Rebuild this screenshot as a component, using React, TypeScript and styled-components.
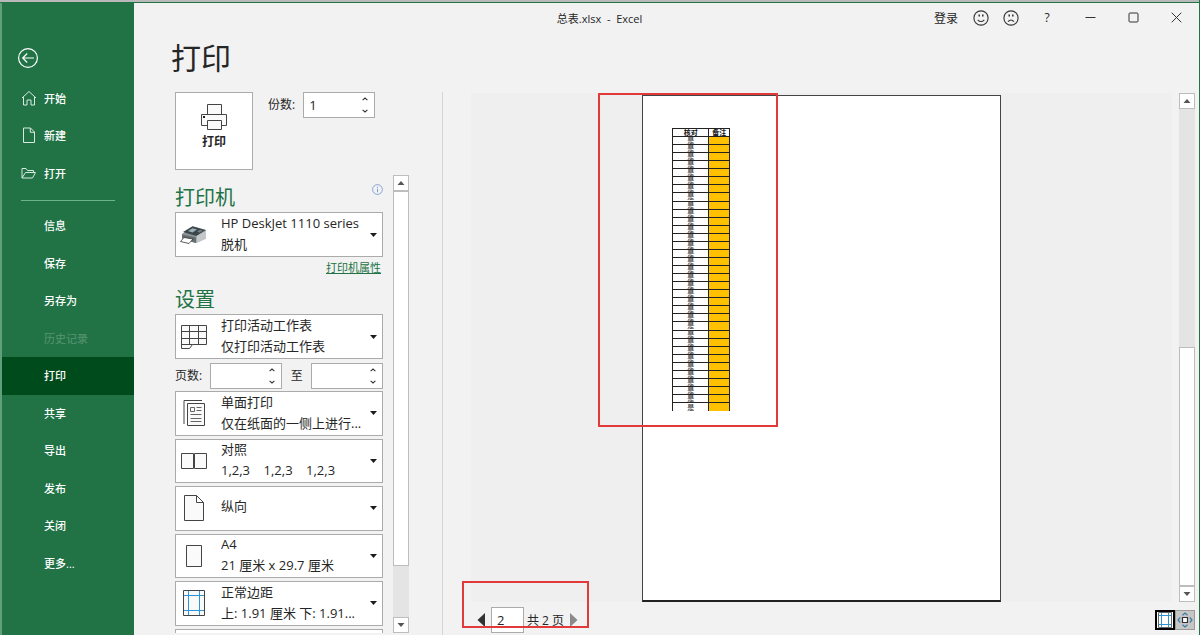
import React from "react";
import styled, { createGlobalStyle } from "styled-components";

const green = "#217346";
const edge = "#ababab";

const GlobalStyle = createGlobalStyle`
  *, *::before, *::after { box-sizing: border-box; }
  body { margin: 0; }
  body, button, input, select {
    font-family: "Open Sans", "Noto Sans CJK SC", sans-serif;
    font-size: 12px;
    color: #262626;
  }
  button, input, select { margin: 0; padding: 0; border: 0; background: none; border-radius: 0; }
  svg { display: block; flex: none; }
`;

const Window = styled.div`
  display: grid;
  grid-template: 29px minmax(0, 1fr) / 134px minmax(0, 1fr);
  height: 100vh;
  overflow: hidden;
  background: #f2f2f2;
  border-right: 1px solid ${green};
  box-shadow: inset 0 2px #b9b9b9, inset 0 3px ${green};
  padding-top: 3px;
`;

/* Title bar */
const TitleBar = styled.header`
  grid-area: 1 / 1 / 2 / 3;
  display: grid;
  grid-template-columns: 1fr auto 1fr;
  align-items: center;
`;
const DocTitle = styled.div`
  grid-column: 2;
  font-size: 11px;
  white-space: pre;
`;
const WindowTools = styled.div`
  display: flex;
  align-items: center;
  justify-content: flex-end;
  padding-right: 1px;
`;
const ToolButton = styled.button<{ $wide?: boolean }>`
  display: flex;
  align-items: center;
  justify-content: center;
  width: ${(p) => (p.$wide ? 43 : 30)}px;
  height: 28px;
`;
const SignIn = styled.button`
  font-size: 12px;
  margin-right: 8px;
`;
const HelpGap = styled.div`
  margin: 0 7px 0 6px;
`;

/* Navigation */
const Sidebar = styled.nav`
  grid-area: 1 / 1 / 3 / 2;
  background: ${green};
  border-left: 2px solid #5f9f7c;
  overflow: hidden;
`;
const BackButton = styled.button`
  display: block;
  margin: 44px 0 11px 15px;
`;
const NavList = styled.ul<{ $size: number }>`
  display: flex;
  flex-direction: column;
  height: ${(p) => p.$size}px;
  margin: 0;
  padding: 0;
  list-style: none;
`;
const NavItem = styled.li`
  display: flex;
  flex: 1;
`;
const NavButton = styled.button<{ $active?: boolean }>`
  display: grid;
  grid-template-columns: 16px 1fr;
  column-gap: 7px;
  align-items: center;
  width: 100%;
  padding: 0 0 1px 19px;
  font-size: 11px;
  font-weight: 500;
  text-align: left;
  color: #fff;
  background: ${(p) => (p.$active ? "#004b1c" : "transparent")};
  &:disabled { color: #4f9069; }
  span { grid-column: 2; }
`;
const NavRule = styled.hr`
  margin: 8px 19px 6px;
  border: 0;
  border-top: 1px solid #6fb58c;
`;

/* Page body */
const Main = styled.main`
  grid-area: 2 / 2 / 3 / 3;
  display: flex;
  flex-direction: column;
  min-height: 0;
`;
const PageTitle = styled.h1`
  margin: 0 0 9px;
  padding: 1px 0 0 37px;
  font-size: 30px;
  line-height: 50px;
  font-weight: 400;
`;
const Columns = styled.div`
  display: flex;
  flex: 1;
  min-height: 0;
`;
const SettingsPane = styled.section`
  display: flex;
  flex-direction: column;
  gap: 5px;
  width: 309px;
  padding: 0 33px 2px 41px;
  border-right: 1px solid #d6d6d6;
`;
const PrintRow = styled.div`
  display: flex;
`;
const PrintButton = styled.button`
  display: flex;
  flex-direction: column;
  align-items: center;
  gap: 1px;
  width: 78px;
  height: 78px;
  padding-top: 10px;
  background: #fff;
  border: 1px solid ${edge};
  font-size: 12px;
  font-weight: 700;
`;
const FieldLabel = styled.label`
  font-size: 12px;
  line-height: 25px;
  white-space: nowrap;
`;
const Copies = styled.div`
  display: flex;
  gap: 8px;
  padding-left: 15px;
`;
const SpinBox = styled.div`
  display: grid;
  grid-template: 1fr 1fr / minmax(0, 1fr) 18px;
  width: 72px;
  height: 26px;
  background: #fff;
  border: 1px solid ${edge};
`;
const SpinInput = styled.input`
  grid-row: 1 / 3;
  width: 100%;
  padding-left: 5px;
  font-size: 13px;
`;
const SpinButton = styled.button`
  display: flex;
  align-items: center;
  justify-content: center;
`;
const ScrollRegion = styled.div`
  display: flex;
  justify-content: space-between;
  flex: 1;
  min-height: 0;
`;
const Options = styled.div`
  width: 208px;
  overflow: hidden;
`;
const HeadingRow = styled.div`
  display: flex;
  justify-content: space-between;
  align-items: flex-start;
  padding-top: 9px;
  height: 37px;
`;
const Heading = styled.h2`
  margin: 0;
  font-size: 20px;
  line-height: 28px;
  font-weight: 400;
  color: ${green};
`;
const LinkRow = styled.div`
  display: flex;
  justify-content: flex-end;
  padding: 2px 2px 0 0;
`;
const PropertiesLink = styled.a`
  font-size: 11px;
  line-height: 18px;
  color: ${green};
`;
const PickerBox = styled.div`
  display: grid;
  grid-template: minmax(0, 1fr) / 36px minmax(0, 1fr) 18px;
  align-items: center;
  justify-items: center;
  height: 45px;
  background: #fff;
  border: 1px solid ${edge};
`;
const PickerIcon = styled.span`
  grid-area: 1 / 1 / 2 / 2;
  pointer-events: none;
`;
const PickerCaretCell = styled.span`
  grid-area: 1 / 3 / 2 / 4;
  pointer-events: none;
`;
const PickerSelect = styled.select<{ $lines: number }>`
  grid-area: 1 / 1 / 2 / 4;
  appearance: none;
  width: 100%;
  height: 100%;
  padding: 0 18px ${(p) => (p.$lines === 2 ? 23 : 5)}px 45px;
  font-size: 13px;
`;
const PickerNote = styled.span`
  grid-area: 1 / 2 / 2 / 3;
  align-self: end;
  justify-self: stretch;
  margin-left: 9px;
  font-size: 13px;
  line-height: 23px;
  white-space: pre;
  pointer-events: none;
`;
const PageRange = styled.div`
  display: flex;
  justify-content: space-between;
  padding: 4px 0 2px;
`;
const PickerStack = styled.div`
  display: flex;
  flex-direction: column;
  gap: 3px;
  height: 282px;
  > div { flex: 1; }
`;

/* Scroll bars */
const ScrollTrack = styled.div`
  display: flex;
  flex-direction: column;
  width: 16px;
  background: #e4e4e4;
`;
const ScrollButton = styled.button`
  display: flex;
  align-items: center;
  justify-content: center;
  height: 16px;
  background: #fff;
  border: 1px solid #bdbdbd;
`;
const ScrollThumb = styled.div<{ $from: number; $to: number }>`
  flex: ${(p) => p.$to - p.$from};
  background: #fff;
  border: 1px solid #bdbdbd;
`;
const ScrollSpace = styled.div<{ $share: number }>`
  flex: ${(p) => p.$share};
`;

/* Preview */
const PreviewPane = styled.section`
  display: flex;
  flex-direction: column;
  flex: 1;
  min-width: 0;
`;
const PreviewArea = styled.div`
  display: flex;
  flex: 1;
  gap: 7px;
  min-height: 0;
  padding: 1px 4px 0 28px;
`;
const Canvas = styled.div`
  display: flex;
  justify-content: center;
  flex: 1;
  padding-top: 2px;
  background: #efefef;
`;
const Paper = styled.div`
  position: relative;
  height: 100%;
  aspect-ratio: 210 / 297;
  padding: 32px 29px;
  background: #fff;
  border: 1px solid #444;
  border-bottom: 2px solid #222;
`;
const Sheet = styled.table`
  width: 58px;
  height: 283px;
  table-layout: fixed;
  border-collapse: collapse;
  font-size: 7px;
  line-height: 7px;
  font-weight: 700;
  text-align: center;
  color: #111;
  th, td {
    height: 8px;
    padding: 0;
    border: 1px solid #222;
    white-space: nowrap;
  }
  th:first-child { width: 36px; }
  td { font-weight: 400; }
  td:last-child { background: #ffc000; }
  tr:last-child td { border-bottom: 0; }
`;
const Mark = styled.div<{ $x: number; $y: number; $w: number; $h: number }>`
  position: absolute;
  left: ${(p) => p.$x}px;
  top: ${(p) => p.$y}px;
  width: ${(p) => p.$w}px;
  height: ${(p) => p.$h}px;
  border: 2px solid #e23a3a;
  pointer-events: none;
`;
const StatusRow = styled.div`
  display: flex;
  justify-content: space-between;
  align-items: center;
  height: 33px;
  padding: 3px 4px 0 33px;
`;
const Pager = styled.div`
  position: relative;
  display: flex;
  align-items: center;
  gap: 3px;
`;
const PagerButton = styled.button`
  padding: 0 3px 0 1px;
  &:disabled { padding: 0 0 0 3px; }
`;
const PageInput = styled.input`
  width: 33px;
  height: 26px;
  padding-left: 5px;
  background: #fff;
  border: 1px solid ${edge};
  font-size: 13px;
`;
const ViewButtons = styled.div`
  display: flex;
`;
const ViewButton = styled.button<{ $on?: boolean }>`
  display: flex;
  align-items: center;
  justify-content: center;
  width: 20px;
  height: 20px;
  background: ${(p) => (p.$on ? "#fff" : "#c6c6c6")};
  border: ${(p) => (p.$on ? "2px solid #000" : "1px solid #9a9a9a")};
`;

type Dir = "up" | "down";

const Caret = ({ dir = "down" }: { dir?: Dir }) => (
  <svg width="8" height="4" viewBox="0 0 8 4">
    <path d={dir === "down" ? "M0.5 0h7L4 4z" : "M0.5 4h7L4 0z"} fill="#555" />
  </svg>
);
const PickerCaret = () => (
  <svg width="7" height="4" viewBox="0 0 7 4">
    <path d="M0 0h7L3.500 4z" fill="#1c1c1c" />
  </svg>
);
const Chevron = ({ dir }: { dir: Dir }) => (
  <svg width="6" height="4" viewBox="0 0 6 4" fill="none" stroke="#333" strokeWidth="1.1">
    <path d={dir === "up" ? "M0.600 3.200 3 1 5.400 3.200" : "M0.600 0.800 3 3 5.400 0.800"} />
  </svg>
);

const Face = ({ sad }: { sad?: boolean }) => (
  <svg width="16" height="16" viewBox="0 0 16 16" fill="none" stroke="#333" strokeWidth="1.1">
    <circle cx="8" cy="8" r="7.100" />
    <path d={sad ? "M5 11.700Q8 8.300 11 11.700" : "M4.700 9.800Q8 13.200 11.300 9.800"} />
    <path d="M6.200 4.600v2M9.800 4.600v2" strokeWidth="1.500" />
  </svg>
);

const navIcon = { width: 16, height: 16, viewBox: "0 0 16 16", fill: "none", stroke: "#d7eadf" };
const HomeIcon = () => (
  <svg {...navIcon}>
    <path d="M1 8 8 1.500 15 8M2.500 7v8H6V10h4v5h3.500V7" />
  </svg>
);
const NewIcon = () => (
  <svg {...navIcon}>
    <path d="M2.500 1h7l4 4v10.500h-11zM9.300 1v4.300h4.200" />
  </svg>
);
const OpenIcon = () => (
  <svg {...navIcon}>
    <path d="M1 13V3.500h4l1.500 2h6V7.500M1 13h10.500l3-5.500H4.500L1 13" />
  </svg>
);

const line = { fill: "#fafafa", stroke: "#444" };
const PrinterGlyph = () => (
  <svg width="28" height="28" viewBox="0 0 28 28" {...line}>
    <path d="M7.500 11V1.500h14V11" />
    <path d="M1.500 11.500h25v11h-25z" />
    <path d="M7.500 17.500h14v9h-14z" />
    <path d="M3 13h2v2H3z" fill="#222" stroke="none" />
  </svg>
);
const DeviceGlyph = () => (
  <svg width="28" height="20" viewBox="0 0 28 20">
    <path d="M2 9 13 1.500 26 5v8.500L16 18 2 13.500z" fill="#8c9295" />
    <path d="M3 7 12.500 1.200 25.500 5 16.500 11z" fill="#3c464a" />
    <path d="M8 6 12.500 3.200 17 4.500 12.500 7.600z" fill="#9db1b8" />
    <path d="M17 6.500 20 4.800 23 5.600 19.500 7.800z" fill="#6c7d83" />
    <path d="M16.500 11 26 5.500v8L16.500 18z" fill="#c3c7c9" />
    <path d="M2 9.500 16 12.500V18l-3-.7L2 13z" fill="#666d70" />
    <path d="M4 12.500 13 14 9 18.500 0.500 16.500z" fill="#fff" stroke="#333" strokeWidth="0.800" />
  </svg>
);
const SheetGlyph = () => (
  <svg width="28" height="26" viewBox="0 0 28 26" {...line}>
    <path d="M1.500 1.500h25v19h-14l-3 4h-8z" />
    <path d="M1.500 7.500h25M1.500 14.500h25M9.500 1.500v19M18.500 1.500v19M1.500 20.500h11" />
  </svg>
);
const OneSidedGlyph = () => (
  <svg width="22" height="28" viewBox="0 0 22 28" {...line}>
    <path d="M1 25V1.500h18" fill="none" />
    <path d="M4.500 4.500h17v22h-17z" />
    <path d="M7.500 8.500h4v4h-4zM13.500 8.500h5M13.500 11.500h5M7.500 15.500h11M7.500 19.500h11M7.500 22.500h11" stroke="#666" />
  </svg>
);
const CollateGlyph = () => (
  <svg width="28" height="18" viewBox="0 0 28 18" {...line}>
    <path d="M1.500 1.500h12v15h-12zM14.500 1.500h12v15h-12z" />
  </svg>
);
const PortraitGlyph = () => (
  <svg width="22" height="28" viewBox="0 0 22 28" {...line}>
    <path d="M1.500 1.500h12l7 7v18h-19zM13.500 1.500v7h7" />
  </svg>
);
const PaperGlyph = () => (
  <svg width="18" height="24" viewBox="0 0 18 24" {...line}>
    <path d="M1.500 1.500h15v21h-15z" />
  </svg>
);
const MarginGlyph = () => (
  <svg width="22" height="28" viewBox="0 0 22 28" fill="none">
    <path d="M0.500 1.500h21v25h-21z" fill="#fafafa" stroke="#444" />
    <path d="M5.500 2v24M16.500 2v24M1 6.500h20M1 21.500h20" stroke="#2f94d4" />
  </svg>
);

const Picker = ({ name, icon, title, note }: { name: string; icon: React.ReactNode; title: string; note?: string }) => (
  <PickerBox>
    <PickerSelect aria-label={name} $lines={note ? 2 : 1}>
      <option>{title}</option>
    </PickerSelect>
    <PickerIcon>{icon}</PickerIcon>
    {note && <PickerNote>{note}</PickerNote>}
    <PickerCaretCell><PickerCaret /></PickerCaretCell>
  </PickerBox>
);

const Spinner = ({ id, value }: { id: string; value: string }) => (
  <SpinBox>
    <SpinInput id={id} defaultValue={value} inputMode="numeric" />
    <SpinButton aria-label="增加"><Chevron dir="up" /></SpinButton>
    <SpinButton aria-label="减少"><Chevron dir="down" /></SpinButton>
  </SpinBox>
);

const ScrollBar = ({ from, to }: { from: number; to: number }) => (
  <ScrollTrack>
    <ScrollButton aria-label="向上滚动"><Caret dir="up" /></ScrollButton>
    {from > 0 && <ScrollSpace $share={from} />}
    <ScrollThumb $from={from} $to={to} />
    {to < 100 && <ScrollSpace $share={100 - to} />}
    <ScrollButton aria-label="向下滚动"><Caret /></ScrollButton>
  </ScrollTrack>
);

const places = [
  { text: "开始", icon: <HomeIcon /> },
  { text: "新建", icon: <NewIcon /> },
  { text: "打开", icon: <OpenIcon /> },
];
const commands = ["信息", "保存", "另存为", "历史记录", "打印", "共享", "导出", "发布", "关闭", "更多..."];
const rows = Array.from({ length: 34 }, (_, i) => i);

export default function App() {
  return (
    <Window>
      <GlobalStyle />
      <Sidebar>
        <BackButton aria-label="返回">
          <svg width="22" height="22" viewBox="0 0 22 22" fill="none" stroke="#fff" strokeWidth="1.2">
            <circle cx="11" cy="11" r="9.400" />
            <path d="M17 11H6M10.200 6.500 5.700 11l4.500 4.500" />
          </svg>
        </BackButton>
        <NavList $size={112}>
          {places.map((p) => (
            <NavItem key={p.text}>
              <NavButton>{p.icon}<span>{p.text}</span></NavButton>
            </NavItem>
          ))}
        </NavList>
        <NavRule />
        <NavList $size={375}>
          {commands.map((c) => (
            <NavItem key={c}>
              <NavButton $active={c === "打印"} disabled={c === "历史记录"}><span>{c}</span></NavButton>
            </NavItem>
          ))}
        </NavList>
      </Sidebar>

      <TitleBar>
        <DocTitle>{"总表.xlsx  -  Excel"}</DocTitle>
        <WindowTools>
          <SignIn>登录</SignIn>
          <ToolButton aria-label="微笑"><Face /></ToolButton>
          <ToolButton aria-label="皱眉"><Face sad /></ToolButton>
          <HelpGap><ToolButton>?</ToolButton></HelpGap>
          <ToolButton $wide aria-label="最小化">
            <svg width="11" height="11" viewBox="0 0 11 11" stroke="#333"><path d="M0.500 5.500h10" /></svg>
          </ToolButton>
          <ToolButton $wide aria-label="最大化">
            <svg width="11" height="11" viewBox="0 0 11 11" fill="none" stroke="#333"><rect x="1" y="1" width="9" height="9" rx="1" /></svg>
          </ToolButton>
          <ToolButton $wide aria-label="关闭">
            <svg width="11" height="11" viewBox="0 0 11 11" stroke="#333"><path d="M0.700 0.700l9.600 9.600M10.300 0.700l-9.600 9.600" /></svg>
          </ToolButton>
        </WindowTools>
      </TitleBar>

      <Main>
        <PageTitle>打印</PageTitle>
        <Columns>
          <SettingsPane>
            <PrintRow>
              <PrintButton><PrinterGlyph />打印</PrintButton>
              <Copies>
                <FieldLabel htmlFor="copies">份数:</FieldLabel>
                <Spinner id="copies" value="1" />
              </Copies>
            </PrintRow>
            <ScrollRegion>
              <Options>
                <HeadingRow>
                  <Heading>打印机</Heading>
                  <svg width="11" height="11" viewBox="0 0 11 11" fill="none" stroke="#7d9cd0">
                    <circle cx="5.500" cy="5.500" r="4.900" strokeWidth="0.900" />
                    <path d="M5.500 4.800v3.400M5.500 2.700v1.200" />
                  </svg>
                </HeadingRow>
                <Picker name="打印机" icon={<DeviceGlyph />} title="HP DeskJet 1110 series" note="脱机" />
                <LinkRow><PropertiesLink href="#properties">打印机属性</PropertiesLink></LinkRow>
                <HeadingRow><Heading>设置</Heading></HeadingRow>
                <Picker name="打印范围" icon={<SheetGlyph />} title="打印活动工作表" note="仅打印活动工作表" />
                <PageRange>
                  <FieldLabel htmlFor="from">页数:</FieldLabel>
                  <Spinner id="from" value="" />
                  <FieldLabel htmlFor="to">至</FieldLabel>
                  <Spinner id="to" value="" />
                </PageRange>
                <PickerStack>
                  <Picker name="单双面" icon={<OneSidedGlyph />} title="单面打印" note="仅在纸面的一侧上进行..." />
                  <Picker name="对照" icon={<CollateGlyph />} title="对照" note={"1,2,3    1,2,3    1,2,3"} />
                  <Picker name="方向" icon={<PortraitGlyph />} title="纵向" />
                  <Picker name="纸张" icon={<PaperGlyph />} title="A4" note="21 厘米 x 29.7 厘米" />
                  <Picker name="边距" icon={<MarginGlyph />} title="正常边距" note="上: 1.91 厘米 下: 1.91..." />
                  <PickerBox />
                </PickerStack>
              </Options>
              <ScrollBar from={0} to={88} />
            </ScrollRegion>
          </SettingsPane>

          <PreviewPane>
            <PreviewArea>
              <Canvas>
                <Paper>
                  <Sheet>
                    <thead>
                      <tr><th>核对</th><th>备注</th></tr>
                    </thead>
                    <tbody>
                      {rows.map((r) => (
                        <tr key={r}><td>是</td><td /></tr>
                      ))}
                    </tbody>
                  </Sheet>
                  <Mark $x={-45} $y={-3} $w={180} $h={334} />
                </Paper>
              </Canvas>
              <ScrollBar from={50} to={100} />
            </PreviewArea>
            <StatusRow>
              <Pager>
                <PagerButton aria-label="上一页">
                  <svg width="8" height="14" viewBox="0 0 8 14"><path d="M8 0v14L0.500 7z" fill="#333" /></svg>
                </PagerButton>
                <PageInput aria-label="页码" defaultValue="2" />
                <span>共 2 页</span>
                <PagerButton aria-label="下一页" disabled>
                  <svg width="8" height="14" viewBox="0 0 8 14"><path d="M0 0v14L7.500 7z" fill="#8a8a8a" /></svg>
                </PagerButton>
                <Mark $x={-14} $y={-26} $w={127} $h={47} />
              </Pager>
              <ViewButtons>
                <ViewButton $on aria-label="显示边距">
                  <svg width="14" height="16" viewBox="0 0 14 16" fill="none">
                    <path d="M0.500 0.500h13v15H0.500z" stroke="#666" />
                    <path d="M3.500 1v14M10.500 1v14M1 3.500h12M1 12.500h12" stroke="#2f94d4" />
                  </svg>
                </ViewButton>
                <ViewButton aria-label="缩放到页面">
                  <svg width="16" height="16" viewBox="0 0 16 16" fill="none" stroke="#3a7ca5" strokeWidth="1.2">
                    <path d="M5.500 5.500h5v5h-5z" fill="#fff" stroke="#333" />
                    <path d="M5.500 3.200 8 1 10.500 3.200M5.500 12.800 8 15 10.500 12.800M3.200 5.500 1 8 3.200 10.500M12.800 5.500 15 8 12.800 10.500" />
                  </svg>
                </ViewButton>
              </ViewButtons>
            </StatusRow>
          </PreviewPane>
        </Columns>
      </Main>
    </Window>
  );
}
